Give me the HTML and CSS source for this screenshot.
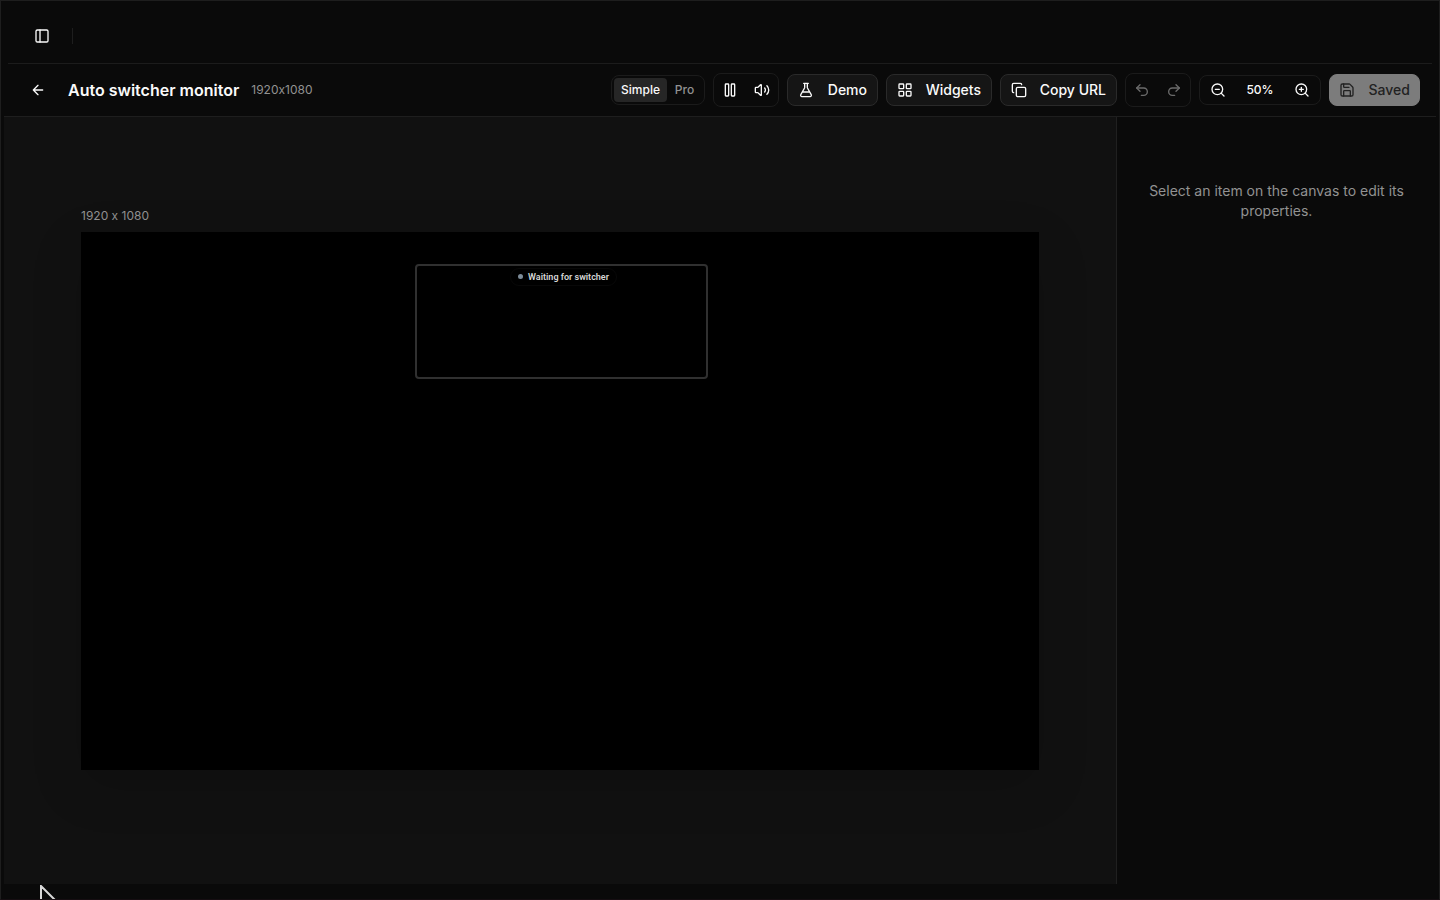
FILE: index.html
```html
<!DOCTYPE html>
<html lang="en">
<head>
<meta charset="utf-8">
<meta name="viewport" content="width=device-width, initial-scale=1">
<title>Auto switcher monitor</title>
<link rel="stylesheet" href="styles.css">
</head>
<body>
<div class="window">
  <div class="shell">
    <header class="topbar">
      <button class="icon-btn" aria-label="Toggle sidebar"><svg class="icon" viewBox="0 0 24 24"><rect x="3" y="3" width="18" height="18" rx="2"/><path d="M9 3v18"/></svg></button>
      <span class="divider"></span>
    </header>
    <div class="toolbar">
      <a class="back" href="#" aria-label="Back"><svg class="icon" viewBox="0 0 24 24"><path d="m12 19-7-7 7-7M19 12H5"/></svg></a>
      <h1 class="title">Auto switcher monitor</h1>
      <span class="size">1920x1080</span>
      <div class="actions">
        <div class="group modes">
          <button class="mode mode-active">Simple</button>
          <button class="mode">Pro</button>
        </div>
        <div class="group pair">
          <button class="icon-btn" aria-label="Pause"><svg class="icon" viewBox="0 0 24 24"><rect x="14" y="3" width="5" height="18" rx="1"/><rect x="5" y="3" width="5" height="18" rx="1"/></svg></button>
          <button class="icon-btn" aria-label="Sound"><svg class="icon" viewBox="0 0 24 24"><path d="M11 4.7a.7.7 0 0 0-1.2-.5L6.4 7.6A1.4 1.4 0 0 1 5.4 8H3a1 1 0 0 0-1 1v6a1 1 0 0 0 1 1h2.4a1.4 1.4 0 0 1 1 .4l3.4 3.4a.7.7 0 0 0 1.2-.5zM16 9a5 5 0 0 1 0 6M19.4 18.4a9 9 0 0 0 0-12.8"/></svg></button>
        </div>
        <button class="btn btn-demo"><svg class="icon" viewBox="0 0 24 24"><path d="M14 2v6a2 2 0 0 0 .2 1l5.6 10a2 2 0 0 1-1.8 3H6a2 2 0 0 1-1.8-3l5.6-10A2 2 0 0 0 10 8V2M6.5 15h11M8.5 2h7"/></svg><span class="btn-label">Demo</span></button>
        <button class="btn btn-widgets"><svg class="icon" viewBox="0 0 24 24"><rect x="3" y="3" width="7" height="7" rx="1"/><rect x="14" y="3" width="7" height="7" rx="1"/><rect x="14" y="14" width="7" height="7" rx="1"/><rect x="3" y="14" width="7" height="7" rx="1"/></svg><span class="btn-label">Widgets</span></button>
        <button class="btn btn-copy"><svg class="icon" viewBox="0 0 24 24"><rect x="8" y="8" width="14" height="14" rx="2"/><path d="M4 16c-1.1 0-2-.9-2-2V4c0-1.1.9-2 2-2h10c1.1 0 2 .9 2 2"/></svg><span class="btn-label">Copy URL</span></button>
        <div class="group pair">
          <button class="icon-btn" aria-label="Undo" disabled><svg class="icon" viewBox="0 0 24 24"><path d="M9 14 4 9l5-5"/><path d="M4 9h10.500a5.500 5.500 0 0 1 0 11H11"/></svg></button>
          <button class="icon-btn" aria-label="Redo" disabled><svg class="icon" viewBox="0 0 24 24"><path d="m15 14 5-5-5-5"/><path d="M20 9H9.500a5.500 5.500 0 0 0 0 11H13"/></svg></button>
        </div>
        <div class="group zoom">
          <button class="icon-btn" aria-label="Zoom out"><svg class="icon" viewBox="0 0 24 24"><circle cx="11" cy="11" r="8"/><path d="m21 21-4.300-4.300M8 11h6"/></svg></button>
          <span class="percent">50%</span>
          <button class="icon-btn" aria-label="Zoom in"><svg class="icon" viewBox="0 0 24 24"><circle cx="11" cy="11" r="8"/><path d="m21 21-4.300-4.300M8 11h6M11 8v6"/></svg></button>
        </div>
        <button class="btn btn-saved" disabled><svg class="icon" viewBox="0 0 24 24"><path d="M15.200 3a2 2 0 0 1 1.400.6l3.800 3.800a2 2 0 0 1 .6 1.400V19a2 2 0 0 1-2 2H5a2 2 0 0 1-2-2V5a2 2 0 0 1 2-2z"/><path d="M17 21v-7a1 1 0 0 0-1-1H8a1 1 0 0 0-1 1v7M7 3v4a1 1 0 0 0 1 1h7"/></svg><span class="btn-label">Saved</span></button>
      </div>
    </div>
    <main class="workspace">
      <section class="canvas">
        <p class="canvas-size">1920 x 1080</p>
        <div class="stage">
          <div class="widget">
            <div class="status"><span class="dot"></span>Waiting for switcher</div>
          </div>
        </div>
      </section>
      <aside class="panel">
        <p class="hint">Select an item on the canvas to edit its properties.</p>
      </aside>
    </main>
  </div>
  <svg class="cursor" viewBox="0 0 20 28"><path d="M2 1v22l5-5 4 8 4-2-4-8h6z"/></svg>
</div>
</body>
</html>
```
FILE: styles.css
```css
* { box-sizing: border-box; }
body {
  margin: 0;
  background: #0a0a0a;
  color: #fafafa;
  font: 14px/20px Inter, "Liberation Sans", sans-serif;
  font-feature-settings: "calt" 0;
}
h1, p { margin: 0; }
button { font: inherit; color: inherit; background: none; border: 0; padding: 0; }
.window {
  position: relative;
  height: 100vh;
  overflow: hidden;
  border: 1px solid #1e1e1e;
  border-bottom-color: #160e12;
  padding: 0 3px 15px;
}
.shell { height: 100%; display: flex; flex-direction: column; }
.topbar {
  flex: none;
  height: 63px;
  margin: 0 4px;
  padding: 7px 18px 0;
  display: flex;
  align-items: center;
  gap: 14px;
  border-bottom: 1px solid #1c1c1c;
}
.icon {
  width: 16px;
  height: 16px;
  display: block;
  fill: none;
  stroke: currentColor;
  stroke-width: 2;
  stroke-linecap: round;
  stroke-linejoin: round;
}
.icon-btn { width: 32px; height: 28px; display: grid; place-items: center; }
.icon-btn:disabled { color: #6b6b6b; }
.divider { width: 1px; height: 16px; background: #1e1e1e; }
.toolbar {
  flex: none;
  height: 53px;
  padding: 0 16px;
  display: flex;
  align-items: center;
  border-bottom: 1px solid #1e1e1e;
}
.back { width: 36px; display: grid; place-items: center; color: #fafafa; }
.title { margin-left: 12px; font-size: 16px; line-height: 24px; font-weight: 600; white-space: nowrap; }
.size { margin-left: 12px; font-size: 12px; color: #929292; }
.actions { margin-left: auto; display: flex; align-items: center; gap: 8px; }
.group {
  display: flex;
  align-items: center;
  border: 1px solid #1b1b1b;
  border-radius: 8px;
}
.modes { width: 94px; height: 30px; padding: 2px; font-size: 12px; font-weight: 500; }
.mode { flex: 1; height: 24px; color: #929292; }
.mode-active { flex: none; width: 53px; border-radius: 4px; background: #262626; color: #fafafa; }
.pair { width: 66px; height: 34px; }
.zoom { width: 122px; height: 30px; padding: 0 2px; }
.percent { flex: 1; text-align: center; font-size: 12px; font-weight: 500; }
.btn {
  height: 32px;
  padding: 0 10px;
  display: flex;
  align-items: center;
  justify-content: space-between;
  font-weight: 500;
  white-space: nowrap;
  border: 1px solid #2a2a2a;
  border-radius: 8px;
  background: #151515;
}
.btn-demo { width: 91px; }
.btn-widgets { width: 106px; }
.btn-copy { width: 117px; }
.btn-saved { width: 91px; padding: 0 9px; background: #7c7c7c; border-color: #7c7c7c; color: #222222; }
.workspace { flex: 1; min-height: 0; display: flex; }
.canvas {
  flex: 1;
  min-width: 0;
  padding: 1px 77px 0;
  display: grid;
  grid-template-rows: 1fr auto 1fr;
  background: #111111;
  overflow: hidden;
}
.canvas-size { align-self: end; padding-bottom: 6px; font-size: 12px; color: #929292; }
.stage {
  aspect-ratio: 16 / 9;
  padding: 32px 0 0 334px;
  background: #000000;
  box-shadow: 0 16px 48px rgba(0, 0, 0, 0.15);
}
.widget {
  width: 293px;
  height: 115px;
  padding-top: 2px;
  display: flex;
  justify-content: center;
  align-items: flex-start;
  border: 2px solid #303030;
  border-radius: 4px;
}
.status {
  height: 18px;
  margin-left: 4px;
  padding: 0 7px;
  display: flex;
  align-items: center;
  gap: 5px;
  border: 1px solid #080808;
  border-radius: 9px;
  font: 600 9px/16px Roboto, "Noto Sans", sans-serif;
  color: #d6d6d6;
}
.dot { width: 5px; height: 5px; border-radius: 50%; background: #7c8b98; }
.panel { width: 320px; flex: none; padding: 64px 16px; border-left: 1px solid #202020; }
.hint { text-align: center; color: #929292; }
.cursor {
  position: absolute;
  left: 38px;
  bottom: -14px;
  width: 20px;
  height: 28px;
  fill: #0a0a0a;
  stroke: #d8d8d8;
  stroke-width: 2;
}
```
